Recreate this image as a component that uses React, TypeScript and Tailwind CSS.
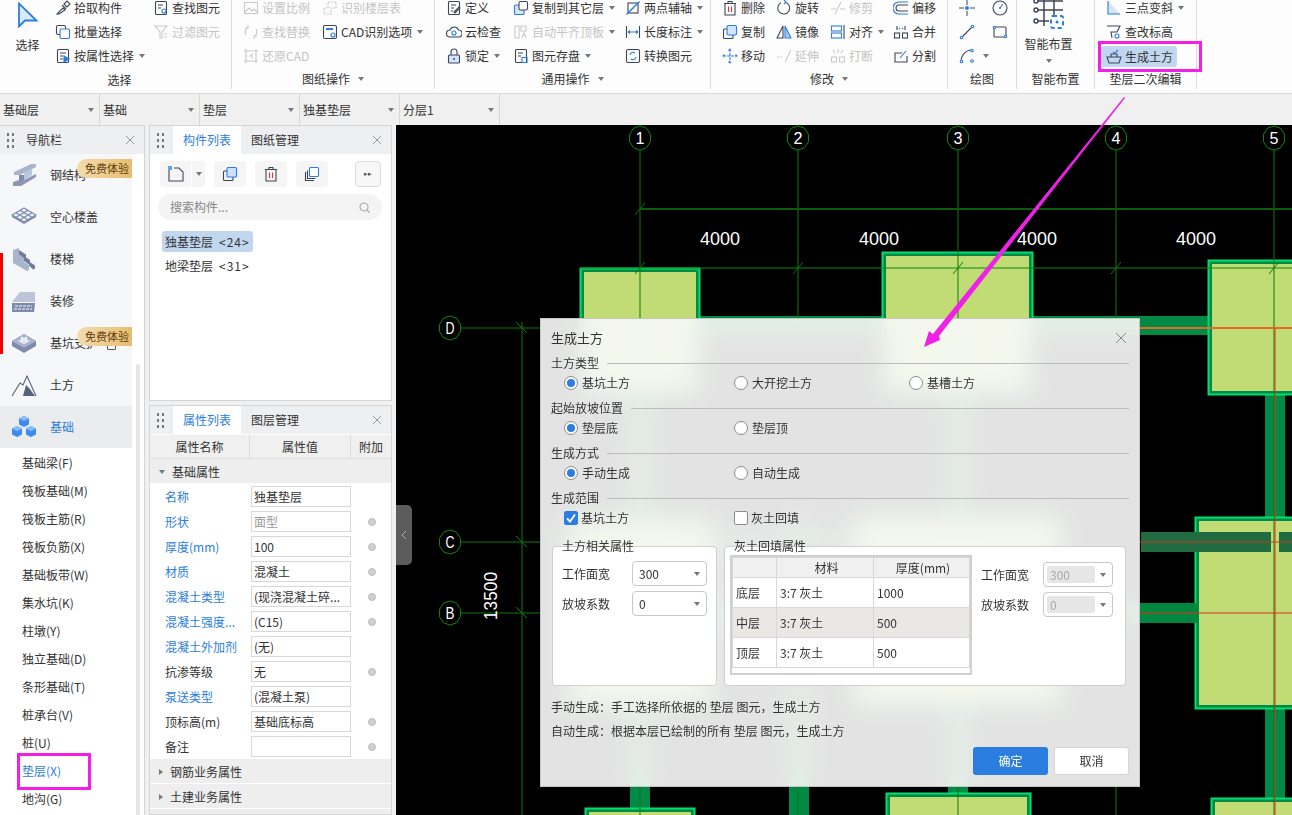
import type { ReactNode } from 'react';

const BLUE = '#2b7de1';
const INK = '#3d4657';
const OFF = '#c9c9c9';

function Ico({ children, off, size = 16 }: { children: ReactNode; off?: boolean; size?: number }) {
  return (
    <svg width={size} height={size} viewBox="0 0 16 16" fill="none" stroke={off ? OFF : INK} strokeWidth="1.1" className="shrink-0">
      {children}
    </svg>
  );
}

function Caret({ className = '' }: { className?: string }) {
  return <span className={`inline-block w-0 h-0 border-x-[3px] border-x-transparent border-t-[4px] border-t-[#777] ${className}`} />;
}

function Drag() {
  return (
    <div className="grid grid-cols-2 gap-x-[3px] gap-y-[3px] w-[7px]">
      {[0, 1, 2, 3, 4, 5].map((i) => (
        <span key={i} className="w-[2px] h-[3px] bg-[#777]" />
      ))}
    </div>
  );
}

function CloseX({ className = '' }: { className?: string }) {
  return (
    <svg width="10" height="10" viewBox="0 0 10 10" stroke="#9a9a9a" strokeWidth="1" className={className}>
      <path d="M1 1l8 8M9 1l-8 8" />
    </svg>
  );
}

function Tool({ icon, label, off, caret }: { icon: ReactNode; label: string; off?: boolean; caret?: boolean }) {
  return (
    <div className={`flex items-center h-6 gap-[3px] whitespace-nowrap ${off ? 'text-[#c4c4c4]' : 'text-[#333]'}`}>
      {icon}
      <span>{label}</span>
      {caret && <Caret className="ml-[2px]" />}
    </div>
  );
}

function Group({ title, width, caret, children }: { title: string; width: string; caret?: boolean; children: ReactNode }) {
  return (
    <div className={`${width} h-[89px] flex flex-col border-r border-[#dcdcdc] shrink-0 overflow-hidden`}>
      <div className="flex h-[72px] -mt-1 pl-[11px]">{children}</div>
      <div className="h-[21px] flex items-center justify-center gap-2 text-[#333] pt-[1px]">
        {title}
        {caret && <Caret />}
      </div>
    </div>
  );
}

const doc = <rect x="2.5" y="1.5" width="11" height="13" rx="1" />;

function Ribbon() {
  return (
    <div className="h-[93px] bg-[#fdfdfd] flex text-xs shrink-0">
      <div className="w-[232px] h-[89px] flex flex-col border-r border-[#dcdcdc] shrink-0 overflow-hidden">
        <div className="flex h-[72px] -mt-1">
          <div className="w-[55px] shrink-0 flex flex-col items-center pt-[6px]">
            <svg width="24" height="26" viewBox="0 0 24 26" fill="#dbe9fb" stroke={BLUE} strokeWidth="1.8" className="ml-[-2px]">
              <path d="M4 1.5V24.5L10 18.5H21.5Z" />
            </svg>
            <span className="mt-[9px] text-[#333]">选择</span>
          </div>
          <div className="w-[98px] shrink-0">
            <Tool label="拾取构件" icon={<Ico><path d="M2 14l6-6 2 2-6 4zM9 4l3-3 3 3-3 3zM7 5l4 4" /></Ico>} />
            <Tool label="批量选择" icon={<Ico><rect x="1.5" y="1.5" width="9" height="9" rx="1.5" /><rect x="5" y="5" width="9.5" height="9.5" rx="1.5" stroke={BLUE} fill="#fff" /></Ico>} />
            <Tool label="按属性选择" caret icon={<Ico>{doc}<path d="M5 5h6M5 8h3M5 11h3" /><path d="M9 8l5 3-5 3z" fill={BLUE} stroke={BLUE} /></Ico>} />
          </div>
          <div className="flex-1">
            <Tool label="查找图元" icon={<Ico>{doc}<path d="M5 5h5M5 8h3" /><circle cx="11" cy="11" r="2" stroke={BLUE} /></Ico>} />
            <Tool off label="过滤图元" icon={<Ico off><path d="M2 2h12l-5 6v6H7V8zM11 10h3M11 13h3" /></Ico>} />
          </div>
        </div>
        <div className="h-[21px] flex items-center justify-center text-[#333] pl-[8px] pt-[3px]">选择</div>
      </div>

      <Group title="图纸操作" width="w-[203px]" caret>
        <div className="w-[79px] shrink-0">
          <Tool off label="设置比例" icon={<Ico off><rect x="1.5" y="2.5" width="13" height="11" /><path d="M2 12l4-4 3 3 2-2 3 3" /></Ico>} />
          <Tool off label="查找替换" icon={<Ico off><path d="M3 11a6 6 0 0 1 2-8M13 5a6 6 0 0 1-2 8M5 1v3H2M11 15v-3h3" /></Ico>} />
          <Tool off label="还原CAD" icon={<Ico off><path d="M3 1v14M13 1v14M1 3h14M1 13h14M10 6L7 8l3 2" /></Ico>} />
        </div>
        <div className="flex-1">
          <Tool off label="识别楼层表" icon={<Ico off><path d="M6 2h8v6H9v6H2V8h4z" strokeDasharray="2 1" /></Ico>} />
          <Tool label="CAD识别选项" caret icon={<Ico><rect x="1.5" y="1.5" width="13" height="13" rx="1.5" /><circle cx="11" cy="11" r="2" stroke={BLUE} /><path d="M4 5h7" stroke={BLUE} strokeWidth="2" /></Ico>} />
        </div>
      </Group>

      <Group title="通用操作" width="w-[276px]" caret>
        <div className="w-[67px] shrink-0">
          <Tool label="定义" icon={<Ico>{doc}<path d="M5 5h5M5 8h3M5 11h2M8 12l5-5 1 1-5 5z" /></Ico>} />
          <Tool label="云检查" icon={<Ico><path d="M4 13a3.5 3.5 0 0 1 0-7 4.5 4.5 0 0 1 8.5 0 3.5 3.5 0 0 1 0 7z" /><circle cx="8" cy="9" r="2" stroke={BLUE} /></Ico>} />
          <Tool label="锁定" caret icon={<Ico><rect x="2.5" y="7" width="11" height="8" rx="1" fill="#d5e5fa" /><path d="M5 7V4a3 3 0 0 1 6 0v3" /><path d="M8 10v2" stroke={BLUE} strokeWidth="2" /></Ico>} />
        </div>
        <div className="w-[112px] shrink-0">
          <Tool label="复制到其它层" caret icon={<Ico><rect x="1.5" y="5" width="9.5" height="9.5" rx="1" fill="#d5e5fa" stroke={BLUE} /><rect x="6" y="1.5" width="8.5" height="8.5" rx="1.5" fill="#fff" /></Ico>} />
          <Tool off label="自动平齐顶板" caret icon={<Ico off><path d="M2 2h4v12H2zM8 2h5v5H8zM9 14l2-5 2 5" /></Ico>} />
          <Tool label="图元存盘" caret icon={<Ico>{doc}<path d="M5 5h5M5 8h3" /><rect x="9" y="9.5" width="5" height="5" stroke={BLUE} /></Ico>} />
        </div>
        <div className="flex-1">
          <Tool label="两点辅轴" caret icon={<Ico><rect x="3" y="3" width="10" height="10" /><path d="M1.5 14.5l13-13" stroke={BLUE} strokeWidth="1.4" /></Ico>} />
          <Tool label="长度标注" caret icon={<Ico><path d="M1.5 2v12M14.5 2v12" /><path d="M3 8h10M3 8l2-1.5M3 8l2 1.5M13 8l-2-1.5M13 8l-2 1.5" stroke={BLUE} /></Ico>} />
          <Tool label="转换图元" icon={<Ico><rect x="1.5" y="1.5" width="13" height="13" rx="1.5" /><path d="M5 7a3 3 0 0 1 5-2M11 9a3 3 0 0 1-5 2" stroke={BLUE} /></Ico>} />
        </div>
      </Group>

      <Group title="修改" width="w-[237px]" caret>
        <div className="w-[54px] shrink-0">
          <Tool label="删除" icon={<Ico><path d="M2 3.5h12M6 3.5V1.5h4v2M3 3.5V15h10V3.5" /><path d="M6.5 6.5v5.5M9.5 6.5v5.5" stroke="#d9352c" /></Ico>} />
          <Tool label="复制" icon={<Ico><rect x="1.5" y="5" width="9.5" height="9.5" rx="1" /><rect x="5" y="1.5" width="9.5" height="9.5" rx="1.5" fill="#d5e5fa" stroke={BLUE} /></Ico>} />
          <Tool label="移动" icon={<svg width="16" height="16" viewBox="0 0 16 16" fill="none" stroke={BLUE} strokeWidth="1.1" className="shrink-0"><path d="M8 1v14M1 8h14M6.5 2.5L8 1l1.5 1.5M6.5 13.5L8 15l1.5-1.5M2.5 6.5L1 8l1.5 1.5M13.5 6.5L15 8l-1.5 1.5" strokeDasharray="3 1" /></svg>} />
        </div>
        <div className="w-[54px] shrink-0">
          <Tool label="旋转" icon={<Ico><path d="M9 2.2a6 6 0 1 1-4 .5" /><path d="M8 0l2 2-2 2" stroke={BLUE} /></Ico>} />
          <Tool label="镜像" icon={<Ico><path d="M1 14L7 2v12z" /><path d="M9 2l6 12H9z" fill="#a8c9f4" stroke={BLUE} /></Ico>} />
          <Tool off label="延伸" icon={<Ico off><path d="M1 9h6" strokeDasharray="2 1" /><path d="M15 2L9 14" /></Ico>} />
        </div>
        <div className="w-[63px] shrink-0">
          <Tool off label="修剪" icon={<Ico off><path d="M1 9h5M10 9h5M11 2L5 14" /></Ico>} />
          <Tool label="对齐" caret icon={<Ico><rect x="1.5" y="2" width="10" height="5" stroke={BLUE} /><rect x="1.5" y="9" width="10" height="5" stroke={BLUE} /><path d="M14 1v14" /></Ico>} />
          <Tool off label="打断" icon={<Ico off><rect x="1.5" y="9" width="5" height="5" /><rect x="9.5" y="9" width="5" height="5" /><path d="M3 2l2 3M13 2l-2 3M8 1v4" /></Ico>} />
        </div>
        <div className="flex-1">
          <Tool label="偏移" icon={<svg width="16" height="16" viewBox="0 0 16 16" fill="none" strokeWidth="1.1" className="shrink-0"><path d="M15 2H6a6 6 0 0 0 0 12h9" stroke={BLUE} /><path d="M15 5H6a3 3 0 0 0 0 6h9" stroke={INK} /></svg>} />
          <Tool label="合并" icon={<Ico><rect x="1.5" y="9" width="5" height="5" /><rect x="9.5" y="9" width="5" height="5" /><path d="M4 2v4M12 2v4" /><path d="M6 4l1 1M10 4L9 5" stroke={BLUE} /></Ico>} />
          <Tool label="分割" icon={<Ico><path d="M14 8v6H2V5h7" /><path d="M7 10l6-7" stroke={BLUE} /></Ico>} />
        </div>
      </Group>

      <Group title="绘图" width="w-[69px]">
        <div className="w-[33px] shrink-0">
          <Tool label="" icon={<svg width="16" height="16" viewBox="0 0 16 16" fill="none" stroke={INK} className="shrink-0"><path d="M0 8h5M11 8h5M8 0v5M8 11v5" /><circle cx="8" cy="8" r="2" fill={BLUE} stroke="none" /></svg>} />
          <Tool label="" icon={<Ico><path d="M2 14L14 2" /><circle cx="2.5" cy="13.5" r="1.3" fill="#fff" stroke={BLUE} /><circle cx="13.5" cy="2.5" r="1.3" fill="#fff" stroke={BLUE} /></Ico>} />
          <Tool label="" caret icon={<Ico><path d="M2 14C2 7 7 2 13 2" /><circle cx="2.5" cy="13.5" r="1.3" fill="#fff" stroke={BLUE} /><circle cx="13" cy="2.5" r="1.3" fill="#fff" stroke={BLUE} /><circle cx="13" cy="13" r="1.3" fill="#fff" stroke={BLUE} /></Ico>} />
        </div>
        <div className="flex-1">
          <Tool label="" icon={<Ico><circle cx="8" cy="8" r="7" /><path d="M8 8l3-4" stroke={BLUE} /><circle cx="8" cy="8" r="1" fill={BLUE} stroke="none" /></Ico>} />
          <Tool label="" icon={<Ico><rect x="2" y="3" width="12" height="10" rx="1" /><circle cx="2.5" cy="3.5" r="1.2" fill="#fff" stroke={BLUE} /><circle cx="13.5" cy="12.5" r="1.2" fill="#fff" stroke={BLUE} /></Ico>} />
        </div>
      </Group>

      <Group title="智能布置" width="w-[78px]">
        <div className="flex-1 flex flex-col items-center -ml-[11px] mr-[14px] text-[#333]">
          <svg width="32" height="32" viewBox="0 0 32 32" fill="none" stroke={INK} strokeWidth="1.5" className="mt-[2px]">
            <path d="M2 3h28M2 12h28M2 23h14M11 0v28M21 0v18" />
            <circle cx="3" cy="3" r="2" fill="#fff" />
            <circle cx="3" cy="12" r="2" fill="#fff" />
            <circle cx="3" cy="23" r="2" fill="#fff" />
            <rect x="18" y="18" width="12" height="12" rx="2" fill="#fff" stroke={BLUE} strokeWidth="2" strokeDasharray="4 3" />
            <circle cx="24" cy="24" r="1.5" fill={BLUE} stroke="none" />
          </svg>
          <span className="mt-[6px]">智能布置</span>
          <Caret className="mt-[7px]" />
        </div>
      </Group>

      <Group title="垫层二次编辑" width="w-[102px]">
        <div className="flex-1">
          <Tool label="三点变斜" caret icon={<Ico><path d="M2 1v13h12z" fill="#d5e5fa" stroke="none" /><path d="M2 1v13h12" stroke={BLUE} /></Ico>} />
          <Tool label="查改标高" icon={<Ico><path d="M1 2h13l-3 6H5l1 6" /><circle cx="11" cy="12" r="2" stroke={BLUE} /></Ico>} />
          <div className="flex items-center h-[21px] mt-[2px] -ml-[5px] pl-[5px] w-[76px] gap-[3px] rounded-[3px] bg-[#c0d7ef] text-[#333]">
            <Ico><path d="M1 8h14l-2 6H3zM5 8V5h6v3" /><path d="M7 3l1.5 1.5L12 1" stroke={BLUE} /></Ico>
            <span>生成土方</span>
          </div>
        </div>
      </Group>
      <div className="flex-1" />
    </div>
  );
}

function ComboBar() {
  const items = ['基础层', '基础', '垫层', '独基垫层', '分层1'];
  return (
    <div className="h-8 bg-[#f0f0f0] border-t border-[#dadada] flex text-xs text-[#333] shrink-0">
      {items.map((t) => (
        <div key={t} className="w-[100px] flex items-center justify-between pl-[3px] pr-[5px] border-r border-[#d8d8d8]">
          {t}
          <Caret />
        </div>
      ))}
    </div>
  );
}

const L = '#a9b4cd';
const D = '#7e8bab';
const navItems: { label: string; badge?: boolean; lock?: boolean; icon: ReactNode }[] = [
  {
    label: '钢结构',
    badge: true,
    icon: (
      <g>
        <path d="M3 9L20 1h5v3L9 12H3z" fill={L} />
        <path d="M13 10l8-4v6l-8 5z" fill="#bcc5db" />
        <path d="M8 12h5v6H8z" fill={D} />
        <path d="M2 19l6-2h5l12-6v3L10 23H2z" fill="#8b97b5" />
      </g>
    ),
  },
  {
    label: '空心楼盖',
    icon: (
      <g>
        <path d="M1 10v2l12 7 12-7v-2z" fill={D} />
        <path d="M1 10l12-7 12 7-12 7z" fill="#eceff5" stroke={D} strokeWidth="1.2" />
        <path d="M5 7.7l12 7M9 5.3l12 7M5 12.3l12-7M9 14.7l12-7" stroke={D} strokeWidth="1.3" />
      </g>
    ),
  },
  {
    label: '楼梯',
    icon: (
      <g>
        <path d="M2 3L8 1v6l5 3v5l5 3v5l-2 1L2 16z" fill={L} />
        <path d="M8 3l7 4.5v3L13 11 8 7.5zM13 9l6 4v3l-2 1-4-3zM18 14.5l6 4v3l-2 1-4-4z" fill="#6f7c9c" />
      </g>
    ),
  },
  {
    label: '装修',
    icon: (
      <g>
        <path d="M1 13L9 3h15v10z" fill="#bcc5db" />
        <path d="M1 14h23l-1 9H1z" fill={D} />
        <path d="M4 17h17M3 20h18" stroke="#f6f7f9" strokeWidth="1.2" strokeDasharray="3 1" />
      </g>
    ),
  },
  {
    label: '基坑支护',
    badge: true,
    lock: true,
    icon: (
      <g>
        <path d="M1 10l12-7 12 7v5l-12 7-12-7z" fill={D} />
        <path d="M1 10l12-7 12 7-12 7z" fill={L} />
        <path d="M7 10l6-3.5 6 3.5-6 3.5z" fill="#dfe3ec" />
        <path d="M10 6h2v5h-2zM14 6h2v5h-2z" fill="#f2f4f8" />
      </g>
    ),
  },
  {
    label: '土方',
    icon: (
      <g>
        <path d="M1 23L9 10l3 2 4-9 9 20" fill="none" stroke="#56617f" strokeWidth="1.1" />
        <path d="M12 23l3-11 3 3 6 8z" fill="#56617f" />
      </g>
    ),
  },
];

const subItems = ['基础梁(F)', '筏板基础(M)', '筏板主筋(R)', '筏板负筋(X)', '基础板带(W)', '集水坑(K)', '柱墩(Y)', '独立基础(D)', '条形基础(T)', '桩承台(V)', '桩(U)', '垫层(X)', '地沟(G)'];

function NavPanel() {
  return (
    <div className="w-[145px] h-full bg-white border-r border-[#d5d5d5] border-t border-t-[#d5d5d5] flex flex-col shrink-0 relative text-xs text-[#333]">
      <div className="h-[28px] bg-[#eeeff1] flex items-center pl-[7px] pr-[9px] shrink-0">
        <Drag />
        <span className="ml-3 flex-1">导航栏</span>
        <CloseX />
      </div>
      <div className="flex flex-1 min-h-0">
        <div className="w-[132px]">
          {navItems.map((n) => (
            <div key={n.label} className="h-[42px] bg-[#f6f7f9] flex items-center relative pl-[11px]">
              <svg width="26" height="24" viewBox="0 0 26 24" className="shrink-0">{n.icon}</svg>
              <span className="ml-[13px]">{n.label}</span>
              {n.lock && <span className="absolute left-[107px] top-[19px] w-[9px] h-[9px] border border-[#555] rounded-[1px]" />}
              {n.badge && (
                <span className="absolute right-0 top-[5px] h-[19px] w-[55px] rounded-l-full bg-gradient-to-r from-[#f4dcae] to-[#e8bd6c] text-[#5d3b0c] text-[11px] flex items-center justify-end pr-[3px]">免费体验</span>
              )}
            </div>
          ))}
          <div className="h-[42px] bg-[#ebecee] flex items-center pl-[11px] text-[#2b7de1]">
            <svg width="26" height="24" viewBox="0 0 26 24" className="shrink-0">
              <path d="M13 1l5 2.5v6L13 12l-5-2.5v-6zM6 11l5 2.5v6L6 22l-5-2.5v-6zM20 11l5 2.5v6L20 22l-5-2.5v-6z" fill="#3d8bf0" />
              <path d="M8 3.5L13 1l5 2.5L13 6zM1 13.5L6 11l5 2.5L6 16zM15 13.5l5-2.5 5 2.5-5 2.5z" fill="#8ebcf8" />
            </svg>
            <span className="ml-[13px]">基础</span>
          </div>
          <div className="pt-[1px]">
            {subItems.map((s) => (
              <div key={s} className={`h-7 flex items-center pl-[22px] ${s === '垫层(X)' ? 'text-[#2b7de1]' : ''}`}>{s}</div>
            ))}
          </div>
        </div>
        <div className="flex-1 bg-white relative">
          <div className="absolute left-[4px] w-[4px] top-[210px] bottom-0 bg-[#e6e6e6] rounded-t" />
        </div>
      </div>
      <div className="absolute left-0 top-[127px] w-[3px] h-[101px] bg-[#f00000]" />
      <div className="absolute left-[17px] top-[627px] w-[74px] h-[37px] border-[3px] border-[#f41ee8]" />
    </div>
  );
}

function PanelHeader({ tabs }: { tabs: string[] }) {
  return (
    <div className="h-[28px] bg-[#eeeff1] flex items-stretch pl-[7px] pr-[9px] shrink-0">
      <div className="flex items-center w-[16px]"><Drag /></div>
      <div className="w-[68px] bg-white text-[#2b7de1] flex items-center justify-center">{tabs[0]}</div>
      <div className="ml-[10px] flex items-center flex-1">{tabs[1]}</div>
      <div className="flex items-center"><CloseX /></div>
    </div>
  );
}

function ComponentPanel() {
  const tb = 'w-8 h-[26px] bg-[#f5f5f5] rounded flex items-center justify-center';
  return (
    <div className="h-[276px] bg-white border border-[#d5d5d5] flex flex-col shrink-0">
      <PanelHeader tabs={['构件列表', '图纸管理']} />
      <div className="flex items-center h-[26px] mt-[7px] pl-[10px] pr-[10px]">
        <div className="w-[45px] h-[26px] bg-[#f5f5f5] rounded flex items-center">
          <div className="w-8 flex justify-center border-r border-white h-full items-center">
            <svg width="16" height="16" viewBox="0 0 16 16" fill="none" stroke={INK} strokeWidth="1.1"><path d="M1 4v11h14V6l-4-4H6" /><rect x="0" y="0" width="4" height="4" fill={BLUE} stroke="none" opacity=".7" /></svg>
          </div>
          <div className="flex-1 flex justify-center"><Caret /></div>
        </div>
        <div className={`${tb} ml-[9px]`}>
          <Ico><rect x="1.5" y="5" width="9.5" height="9.5" rx="1" /><rect x="5" y="1.5" width="9.5" height="9.5" rx="1" fill="#cfe1fa" stroke={BLUE} /></Ico>
        </div>
        <div className={`${tb} ml-[9px]`}>
          <Ico><path d="M2 3.5h12M6 3.5V1.5h4v2M3 3.5V15h10V3.5" /><path d="M6.5 6.5v5.5M9.5 6.5v5.5" stroke="#d9352c" /></Ico>
        </div>
        <div className={`${tb} ml-[9px]`}>
          <Ico><path d="M1.5 6v8.5H10M3.5 4.5v8h8" /><rect x="5.5" y="1.5" width="9" height="9" rx="1" stroke={BLUE} fill="#fff" /></Ico>
        </div>
        <div className="ml-auto w-[26px] h-[26px] bg-[#f7f7f7] border border-[#dcdcdc] rounded text-[7px] flex items-center justify-center text-[#555]">▸▸</div>
      </div>
      <div className="ml-2 mr-[9px] mt-[7px] h-[26px] rounded-full bg-[#f4f4f4] flex items-center justify-between pl-3 pr-3 text-[#888]">
        搜索构件...
        <svg width="11" height="11" viewBox="0 0 11 11" fill="none" stroke="#aaa" strokeWidth="1.2"><circle cx="5" cy="5" r="4" /><path d="M8 8l2.5 2.5" /></svg>
      </div>
      <div className="ml-3 mt-[11px] w-[91px] h-[21px] bg-[#c0d7ef] rounded-[3px] flex items-center pl-[3px] whitespace-nowrap">独基垫层<span className="ml-[6px] tracking-[1px]">&lt;24&gt;</span></div>
      <div className="ml-3 mt-[3px] h-[21px] flex items-center pl-[3px] whitespace-nowrap">地梁垫层<span className="ml-[6px] tracking-[1px]">&lt;31&gt;</span></div>
    </div>
  );
}

const props: { k: string; v: string; link?: boolean; dot?: boolean; dim?: boolean }[] = [
  { k: '名称', v: '独基垫层', link: true },
  { k: '形状', v: '面型', link: true, dot: true, dim: true },
  { k: '厚度(mm)', v: '100', link: true, dot: true },
  { k: '材质', v: '混凝土', link: true, dot: true },
  { k: '混凝土类型', v: '(现浇混凝土碎...', link: true, dot: true },
  { k: '混凝土强度...', v: '(C15)', link: true, dot: true },
  { k: '混凝土外加剂', v: '(无)', link: true },
  { k: '抗渗等级', v: '无', dot: true },
  { k: '泵送类型', v: '(混凝土泵)', link: true },
  { k: '顶标高(m)', v: '基础底标高', dot: true },
  { k: '备注', v: '', dot: true },
];

function PropRowGroup({ label, open }: { label: string; open?: boolean }) {
  return (
    <div className="h-[25px] bg-[#eeeeee] flex items-center pl-[9px] pt-[2px] border-b border-white shrink-0">
      {open ? <Caret /> : <span className="w-0 h-0 border-y-[3px] border-y-transparent border-l-[4px] border-l-[#777] inline-block" />}
      <span className="ml-[7px]">{label}</span>
    </div>
  );
}

function PropsPanel() {
  return (
    <div className="flex-1 min-h-0 mt-1 bg-white border border-[#d5d5d5] flex flex-col overflow-hidden">
      <PanelHeader tabs={['属性列表', '图层管理']} />
      <div className="h-[24px] mt-[1px] bg-[#f0f0f0] border-b border-[#dcdcdc] flex shrink-0">
        <div className="w-[100px] flex items-center justify-center border-r border-[#dcdcdc]">属性名称</div>
        <div className="w-[101px] flex items-center justify-center border-r border-[#dcdcdc]">属性值</div>
        <div className="flex-1 flex items-center justify-center">附加</div>
      </div>
      <PropRowGroup label="基础属性" open />
      {props.map((p) => (
        <div key={p.k} className="h-[25px] flex items-center shrink-0">
          <span className={`w-[101px] pl-[15px] whitespace-nowrap ${p.link ? 'text-[#2b7de1]' : ''}`}>{p.k}</span>
          <div className={`w-[100px] h-[21px] border border-[#d8d8d8] flex items-center pl-[2px] whitespace-nowrap overflow-hidden ${p.dim ? 'text-[#999]' : ''}`}>{p.v}</div>
          {p.dot && <span className="ml-[17px] w-2 h-2 rounded-full bg-[#cfcfcf] border border-[#bdbdbd]" />}
        </div>
      ))}
      <PropRowGroup label="钢筋业务属性" />
      <PropRowGroup label="土建业务属性" />
      <div className="flex-1 bg-[#eeeeee]" />
    </div>
  );
}

function Footing({ x, y, w, h }: { x: number; y: number; w: number; h: number }) {
  return (
    <g>
      <rect x={x} y={y} width={w} height={h} fill="#008a45" />
      <rect x={x + 0.5} y={y + 0.5} width={w - 1} height={h - 1} fill="none" stroke="#00e070" strokeWidth="2" />
      <rect x={x + 4} y={y + 4} width={w - 8} height={h - 8} fill="#c1dc74" />
    </g>
  );
}

function Axis({ x, y, t }: { x: number; y: number; t: string }) {
  const r = 11;
  const pts = [0, 1, 2, 3, 4, 5, 6, 7, 8, 9].map((i) => {
    const a = (i * Math.PI) / 5 + Math.PI / 10;
    return `${x + r * Math.cos(a)},${y + r * Math.sin(a) * 1.1}`;
  }).join(' ');
  return (
    <g>
      <polygon points={pts} fill="#000" stroke="#0a8a0a" strokeWidth="1" />
      <text x={x} y={y + 6} fill="#fff" fontSize="17" textAnchor="middle" fontFamily="Liberation Sans" textLength="9" lengthAdjust="spacingAndGlyphs">{t}</text>
    </g>
  );
}

function Drawing() {
  const cols = [640, 798, 958, 1116, 1274];
  return (
    <svg className="absolute inset-0" width="896" height="690" viewBox="396 125 896 690">
      <rect x="396" y="125" width="896" height="690" fill="#000" />
      {/* beams */}
      <g fill="#008a45">
        <rect x="630" y="395" width="20" height="420" />
        <rect x="948" y="395" width="20" height="420" />
        <rect x="789" y="515" width="20" height="300" />
        <rect x="1265" y="390" width="20" height="425" />
        <rect x="700" y="316" width="182" height="19" />
        <rect x="1033" y="316" width="176" height="19" />
        <rect x="700" y="603" width="150" height="20" />
        <rect x="1060" y="603" width="140" height="20" />
      </g>
      <rect x="700" y="532" width="152" height="20" fill="#206c40" />
      <Footing x={580} y={268} w={120} h={127} />
      <Footing x={882} y={252} w={151} h={143} />
      <Footing x={1208} y={260} w={100} h={135} />
      <Footing x={566} y={517} w={148} h={190} />
      <Footing x={852} y={515} w={211} h={192} />
      <Footing x={1195} y={517} w={110} h={192} />
      <Footing x={585} y={808} w={110} h={40} />
      <Footing x={886} y={793} w={145} h={60} />
      <Footing x={1211} y={798} w={90} h={40} />
      <rect x="1141" y="532" width="130" height="20" fill="#206c40" />
      <rect x="1279" y="532" width="13" height="20" fill="#206c40" />
      <rect x="1141" y="603" width="56" height="20" fill="#00873f" />
      {/* grid */}
      <g stroke="#0a7a0a" strokeWidth="1">
        {cols.map((x) => <line key={x} x1={x} y1="150" x2={x} y2="815" />)}
        <line x1="580" y1="268" x2="1292" y2="268" stroke="#0a8a0a" />
        {cols.map((x) => <line key={`t${x}`} x1={x - 5} y1="274" x2={x + 5} y2="262" />)}
        <line x1="635" y1="215" x2="645" y2="203" />
        <line x1="461" y1="328" x2="560" y2="328" />
        <line x1="461" y1="542" x2="560" y2="542" />
        <line x1="461" y1="613" x2="560" y2="613" />
        <line x1="522" y1="322" x2="522" y2="815" />
        <line x1="516" y1="322" x2="527" y2="333" />
        <line x1="516" y1="536" x2="527" y2="547" />
        <line x1="516" y1="607" x2="527" y2="618" />
      </g>
      <line x1="640" y1="209" x2="1292" y2="209" stroke="#0b5c0b" strokeWidth="2" />
      <g stroke="#e0301c" strokeWidth="1">
        <line x1="1130" y1="328" x2="1292" y2="328" stroke="#e4672c" strokeWidth="2" />
        <line x1="1275" y1="328" x2="1275" y2="815" />
        <line x1="1130" y1="542" x2="1292" y2="542" stroke="#c83a20" />
        <line x1="1130" y1="613" x2="1292" y2="613" />
      </g>
      {cols.map((x, i) => <Axis key={x} x={x} y={138} t={String(i + 1)} />)}
      <Axis x={450} y={328} t="D" />
      <Axis x={450} y={542} t="C" />
      <Axis x={450} y={613} t="B" />
      {[720, 879, 1037, 1196].map((x) => (
        <text key={x} x={x} y="245" fill="#fff" fontSize="18" textAnchor="middle" fontFamily="Liberation Sans" textLength="40" lengthAdjust="spacingAndGlyphs">4000</text>
      ))}
      <text x="0" y="0" transform="translate(497 620) rotate(-90)" fill="#fff" fontSize="18" fontFamily="Liberation Sans" textLength="48" lengthAdjust="spacingAndGlyphs">13500</text>
    </svg>
  );
}

function SectionTitle({ children }: { children: string }) {
  return (
    <div className="h-5 flex items-center gap-2 text-[#333]">
      {children}
      <span className="flex-1 h-px bg-[#bdbdbd]" />
    </div>
  );
}

function Radio({ label, on, width }: { label: string; on?: boolean; width: string }) {
  return (
    <div className={`${width} flex items-center`}>
      <span className="w-[14px] h-[14px] rounded-full bg-white border border-[#8c8c8c] flex items-center justify-center">
        {on && <span className="w-2 h-2 rounded-full bg-[#2b7de1]" />}
      </span>
      <span className="ml-[4px]">{label}</span>
    </div>
  );
}

function Check({ label, on, width }: { label: string; on?: boolean; width: string }) {
  return (
    <div className={`${width} flex items-center`}>
      <span className={`w-[14px] h-[14px] rounded-[2px] flex items-center justify-center border ${on ? 'bg-[#2b7de1] border-[#2b7de1]' : 'bg-white border-[#8c8c8c]'}`}>
        {on && <svg width="10" height="9" viewBox="0 0 10 9" fill="none" stroke="#fff" strokeWidth="1.8"><path d="M1 4.5l3 3 5-7" /></svg>}
      </span>
      <span className="ml-[3px]">{label}</span>
    </div>
  );
}

function Select({ v, width, off }: { v: string; width: string; off?: boolean }) {
  return (
    <div className={`${width} h-[25px] bg-white border border-[#c8c8c8] rounded-[4px] flex items-center justify-between pr-[6px] p-[3px]`}>
      <span className={`h-full flex-1 flex items-center pl-[3px] rounded-[2px] ${off ? 'bg-[#e6e6e6] text-[#aaa] mr-[5px]' : ''}`}>{v}</span>
      <Caret />
    </div>
  );
}

function Dialog() {
  const td = 'border border-[#d8d8d8] pl-[3px] font-normal';
  return (
    <div className="absolute left-[144px] top-[193px] w-[600px] h-[469px] bg-[rgba(250,250,250,0.91)] backdrop-blur-md border border-[#c4c4c4] px-[10px] text-xs text-[#333]">
      <div className="h-[34px] flex items-center justify-between pt-[3px] pr-[1px]">
        <span className="text-[13px]">生成土方</span>
        <svg width="12" height="12" viewBox="0 0 12 12" stroke="#888" strokeWidth="1" className="mr-[1px]"><path d="M1 1l10 10M11 1L1 11" /></svg>
      </div>

      <SectionTitle>土方类型</SectionTitle>
      <div className="h-5 mb-[5px] flex items-center pl-[13px]">
        <Radio label="基坑土方" on width="w-[170px]" />
        <Radio label="大开挖土方" width="w-[175px]" />
        <Radio label="基槽土方" width="w-[100px]" />
      </div>
      <SectionTitle>起始放坡位置</SectionTitle>
      <div className="h-5 mb-[5px] flex items-center pl-[13px]">
        <Radio label="垫层底" on width="w-[170px]" />
        <Radio label="垫层顶" width="w-[175px]" />
      </div>
      <SectionTitle>生成方式</SectionTitle>
      <div className="h-5 mb-[5px] flex items-center pl-[13px]">
        <Radio label="手动生成" on width="w-[170px]" />
        <Radio label="自动生成" width="w-[175px]" />
      </div>
      <SectionTitle>生成范围</SectionTitle>
      <div className="h-5 flex items-center pl-[13px]">
        <Check label="基坑土方" on width="w-[170px]" />
        <Check label="灰土回填" width="w-[175px]" />
      </div>

      <div className="flex gap-[7px] mt-[18px] ml-px">
        <div className="w-[165px] h-[140px] bg-white border border-[#cfcfcf] rounded-[4px] px-[9px]">
          <div className="-mt-[8px] h-[14px] leading-[14px]">土方相关属性</div>
          <div className="mt-[8px] h-[25px] flex items-center justify-between">工作面宽<Select v="300" width="w-[75px]" /></div>
          <div className="mt-[5px] h-[25px] flex items-center justify-between">放坡系数<Select v="0" width="w-[75px]" /></div>
        </div>
        <div className="w-[402px] h-[140px] bg-white border border-[#cfcfcf] rounded-[4px] pl-[5px] flex relative">
          <div className="absolute left-[9px] -top-[8px] h-[14px] leading-[14px]">灰土回填属性</div>
          <div className="mt-[8px] w-[242px] h-[120px] border-2 border-[#d0d0d0] shrink-0">
            <table className="w-full table-fixed border-collapse">
              <thead>
                <tr className="h-[20px] bg-[#f0f0f0]">
                  <th className={`${td} w-[44px]`} />
                  <th className={`${td} w-[97px] text-center`}>材料</th>
                  <th className={`${td} text-center`}>厚度(mm)</th>
                </tr>
              </thead>
              <tbody>
                {[['底层', '1000'], ['中层', '500'], ['顶层', '500']].map(([a, b]) => (
                  <tr key={a} className={`h-[30px] ${a === '中层' ? 'bg-[#e9e8e5]' : ''}`}>
                    <td className={td}>{a}</td>
                    <td className={td}>3:7 灰土</td>
                    <td className={td}>{b}</td>
                  </tr>
                ))}
              </tbody>
            </table>
          </div>
          <div className="flex-1 pl-[9px] pr-[12px]">
            <div className="mt-[15px] h-[25px] flex items-center justify-between">工作面宽<Select v="300" width="w-[70px]" off /></div>
            <div className="mt-[5px] h-[25px] flex items-center justify-between">放坡系数<Select v="0" width="w-[70px]" off /></div>
          </div>
        </div>
      </div>

      <div className="mt-[11px] h-5 flex items-center">手动生成：手工选择所依据的 垫层 图元，生成土方</div>
      <div className="mt-1 h-5 flex items-center">自动生成：根据本层已绘制的所有 垫层 图元，生成土方</div>
      <div className="mt-[6px] flex justify-end gap-[6px]">
        <div className="w-[75px] h-7 rounded-[3px] bg-[#2b7de1] text-white flex items-center justify-center">确定</div>
        <div className="w-[75px] h-7 rounded-[3px] bg-white border border-[#d5d5d5] flex items-center justify-center">取消</div>
      </div>
    </div>
  );
}

export default function App() {
  return (
    <div className="relative w-[1292px] h-[815px] overflow-hidden flex flex-col bg-[#f0f0f0] font-['Noto_Sans_CJK_SC','Liberation_Sans',sans-serif]">
      <Ribbon />
      <ComboBar />
      <div className="flex flex-1 min-h-0">
        <NavPanel />
        <div className="w-[243px] ml-1 h-full flex flex-col shrink-0 text-xs text-[#333]">
          <ComponentPanel />
          <PropsPanel />
        </div>
        <div className="relative ml-1 flex-1 overflow-hidden">
          <Drawing />
          <div className="absolute left-0 top-[380px] w-4 h-[60px] bg-[#5c5c5c] rounded-r-[5px] flex items-center justify-center">
            <svg width="6" height="10" viewBox="0 0 6 10" fill="none" stroke="#aaa"><path d="M5 1L1 5l4 4" /></svg>
          </div>
          <Dialog />
        </div>
      </div>
      {/* call-outs drawn on top of the page */}
      <div className="absolute left-[1098px] top-[41px] w-[104px] h-[31px] border-[3px] border-[#f41ee8]" />
      <svg className="absolute inset-0 pointer-events-none" width="1292" height="815">
        <path d="M1124 97L1125 98L939 336L940 340L924 347L929 331L933 334Z" fill="#f020e8" />
      </svg>
    </div>
  );
}
